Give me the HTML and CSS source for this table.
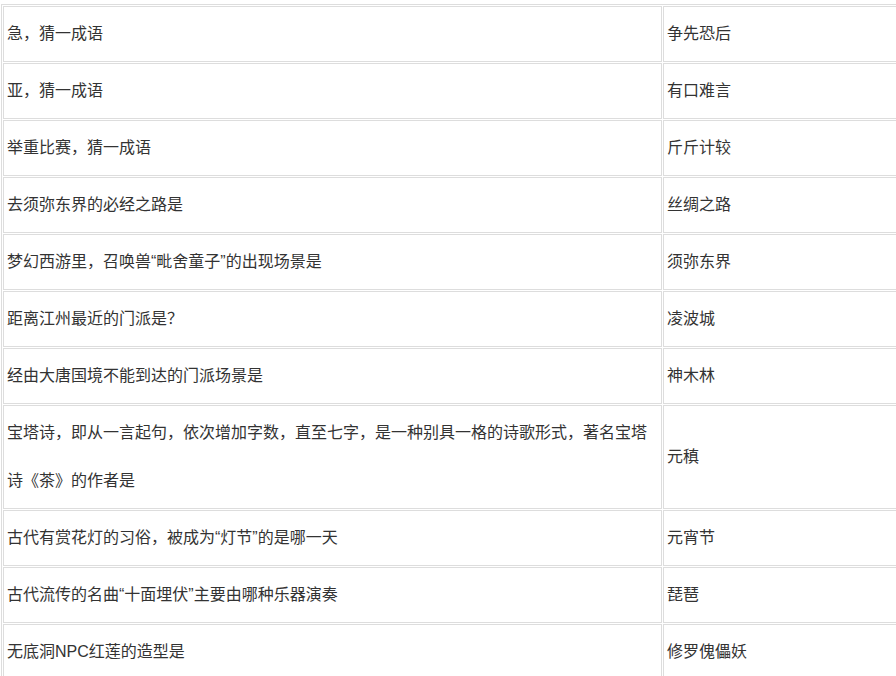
FILE: index.html
```html
<!DOCTYPE html>
<html lang="zh-CN">
<head>
    <meta charset="UTF-8">
    <meta name="viewport" content="width=device-width, initial-scale=1.0">
    <title>梦幻西游 答题答案</title>
    <link rel="stylesheet" href="styles.css">
</head>
<body>
    <table class="answers">
        <tbody>
            <tr>
                <td class="question">急，猜一成语</td>
                <td class="answer">争先恐后</td>
            </tr>
            <tr>
                <td class="question">亚，猜一成语</td>
                <td class="answer">有口难言</td>
            </tr>
            <tr>
                <td class="question">举重比赛，猜一成语</td>
                <td class="answer">斤斤计较</td>
            </tr>
            <tr>
                <td class="question">去须弥东界的必经之路是</td>
                <td class="answer">丝绸之路</td>
            </tr>
            <tr>
                <td class="question">梦幻西游里，召唤兽“毗舍童子”的出现场景是</td>
                <td class="answer">须弥东界</td>
            </tr>
            <tr>
                <td class="question">距离江州最近的门派是？</td>
                <td class="answer">凌波城</td>
            </tr>
            <tr>
                <td class="question">经由大唐国境不能到达的门派场景是</td>
                <td class="answer">神木林</td>
            </tr>
            <tr>
                <td class="question">宝塔诗，即从一言起句，依次增加字数，直至七字，是一种别具一格的诗歌形式，著名宝塔诗《茶》的作者是</td>
                <td class="answer">元稹</td>
            </tr>
            <tr>
                <td class="question">古代有赏花灯的习俗，被成为“灯节”的是哪一天</td>
                <td class="answer">元宵节</td>
            </tr>
            <tr>
                <td class="question">古代流传的名曲“十面埋伏”主要由哪种乐器演奏</td>
                <td class="answer">琵琶</td>
            </tr>
            <tr>
                <td class="question">无底洞NPC红莲的造型是</td>
                <td class="answer">修罗傀儡妖</td>
            </tr>
        </tbody>
    </table>
</body>
</html>
```

FILE: styles.css
```css
html {
    overflow: hidden;
}

body {
    margin: 0;
    padding: 0;
    background: #fff;
    font-family: "Liberation Sans", "Noto Sans CJK SC", sans-serif;
    font-size: 16px;
    color: #333;
}

.answers {
    margin: 4px 0 0 1px;
    width: 960px;
    table-layout: fixed;
    border: 1px solid #ddd;
    border-collapse: separate;
    border-spacing: 1px;
}

.answers td {
    box-sizing: border-box;
    border: 1px solid #ddd;
    padding: 3px;
    line-height: 48px;
    vertical-align: middle;
    text-align: left;
}

.question {
    width: 659px;
}
```
